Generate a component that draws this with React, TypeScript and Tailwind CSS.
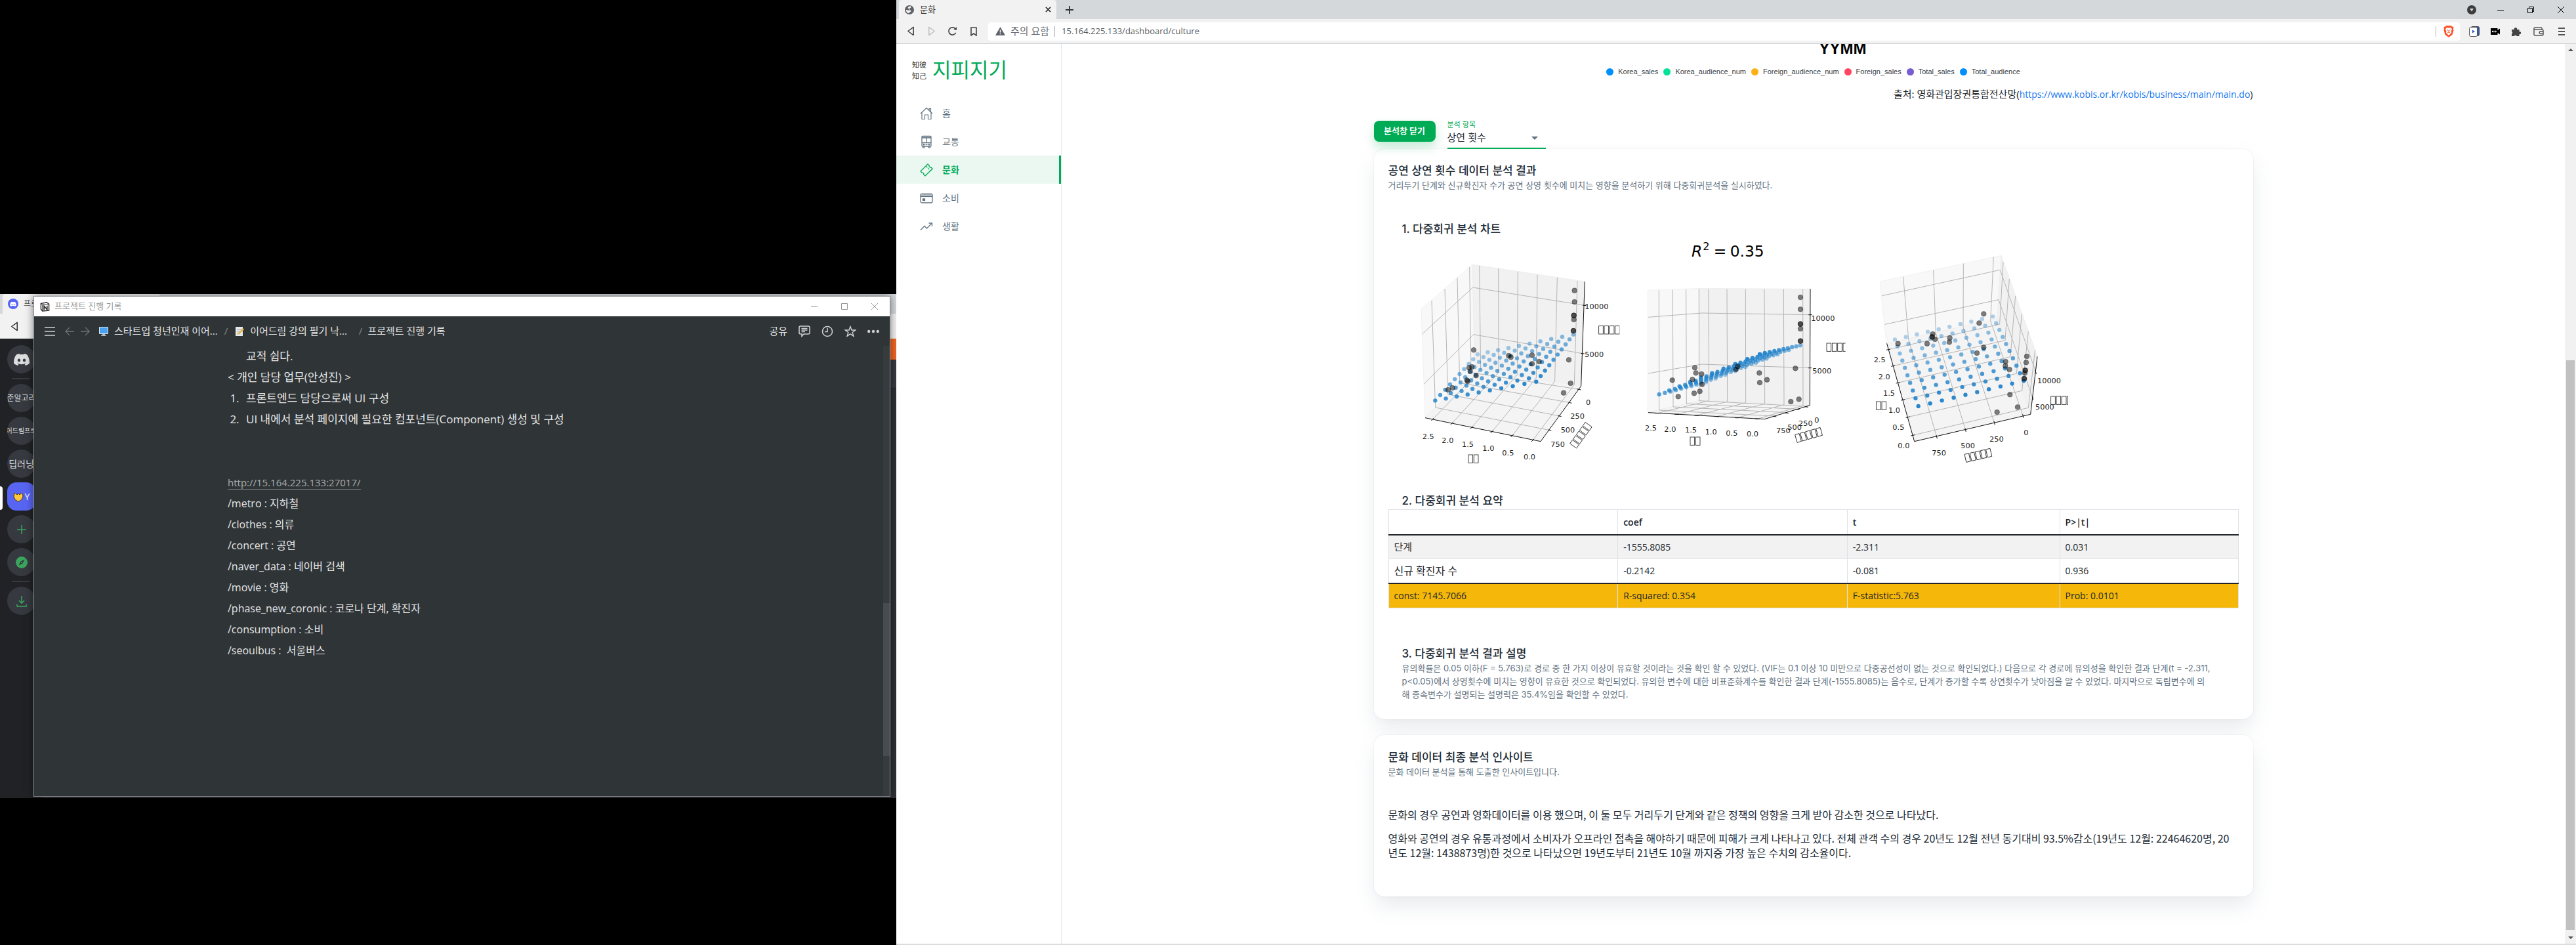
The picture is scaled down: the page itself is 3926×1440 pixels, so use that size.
import React from "react";

const SANS = "font-['Open_Sans','Noto_Sans_CJK_KR',sans-serif]";
const INTER = "font-['Inter','Noto_Sans_CJK_KR',sans-serif]";

type Pt = [number, number];

/* ---------- Scatter plots ---------- */

// Maps the unit square onto a quadrilateral with perspective.
function project(q: [Pt, Pt, Pt, Pt], u: number, v: number): Pt {
  const [[x0, y0], [x1, y1], [x2, y2], [x3, y3]] = q;
  const dx1 = x1 - x2;
  const dx2 = x3 - x2;
  const dx3 = x0 - x1 + x2 - x3;
  const dy1 = y1 - y2;
  const dy2 = y3 - y2;
  const dy3 = y0 - y1 + y2 - y3;
  const den = dx1 * dy2 - dx2 * dy1;
  const g = (dx3 * dy2 - dx2 * dy3) / den;
  const h = (dx1 * dy3 - dx3 * dy1) / den;
  const w = g * u + h * v + 1;
  return [
    ((x1 - x0 + g * x1) * u + (x3 - x0 + h * x3) * v + x0) / w,
    ((y1 - y0 + g * y1) * u + (y3 - y0 + h * y3) * v + y0) / w,
  ];
}

type Plot = {
  dx: number;
  clip: string;
  panes: [string, string][];
  grid: string;
  axes: string;
  quad: [Pt, Pt, Pt, Pt];
  alpha: [number, number, number, number];
  dots: Pt[];
  strong: Pt[];
  labels: [number, number, string][];
  boxes: [number, number, number, number][];
};

const plots: Plot[] = [
  {
    dx: 12,
    clip: "M0 0H1045V1140H0z",
    panes: [
      ["138,335 373,131 383,608 156,832", "#f8f8f8"],
      ["373,131 886,209 869,687 383,608", "#f1f1f1"],
      ["383,608 869,687 684,940 156,832", "#f4f4f4"],
    ],
    grid:
      "M190 839L410 612L404 137M278 858L492 625L491 150M368 877L577 635L580 163M461 896L664 650L669 178M554 914L749 665L760 191M648 935L838 680L852 206" +
      "M860 702L366 625L359 143M820 763L314 672L303 192M773 824L260 725L246 243M727 889L203 785L186 297" +
      "M143 449L374 236L884 318M151 677L377 451L876 538",
    axes:
      "M156 832L684 940L869 687L886 209M196 833L184 845M284 852L272 864M374 871L362 883M467 890L455 902M560 908L548 920M654 929L642 941M850 700L868 704M811 761L826 765M764 822L779 826M718 887L733 891M876 317L892 319M868 537L884 539",
    quad: [[202, 753], [664, 667], [834, 451], [396, 542]],
    alpha: [0.8, 0.95, 0.55, 0.35],
    dots: [[839, 250], [839, 302], [836, 383], [813, 567], [821, 674], [789, 718], [378, 522], [538, 548], [548, 555], [645, 546], [645, 585], [677, 575], [357, 603], [370, 599], [362, 619], [389, 639], [347, 660], [351, 665], [261, 704], [281, 695]],
    strong: [[836, 364], [834, 434]],
    labels: [[143, 929, "2.5"], [232, 948, "2.0"], [324, 965, "1.5"], [418, 984, "1.0"], [508, 1005, "0.5"], [606, 1023, "0.0"], [891, 774, "0"], [820, 837, "250"], [776, 900, "500"], [730, 965, "750"], [886, 335, "10000"], [886, 554, "5000"]],
    boxes: [[377, 1019, 2, 0], [998, 430, 4, 0], [868, 911, 5, -54]],
  },
  {
    dx: 1032,
    clip: "M130 0H1058V1140H130z",
    panes: [
      ["154,249 402,240 402,750 154,808", "#f8f8f8"],
      ["388,240 898,243 895,775 388,752", "#f1f1f1"],
      ["154,808 402,750 895,775 688,838", "#f4f4f4"],
    ],
    grid:
      "M197 811L434 754L432 243M288 816L518 758L516 243M378 821L602 763L601 243M470 826L689 768L687 243M563 832L777 772L775 243M655 837L864 776L863 243" +
      "M735 824L206 797L205 249M790 808L270 782L268 247M840 792L331 768L329 245M880 780L389 754L388 243" +
      "M156 372L401 353L898 361M156 629L401 587L895 604",
    axes:
      "M156 808L688 838L895 775L897 243M186 811H206M277 816H297M367 821H387M460 826H480M553 832H573M645 837H665M727 825L742 827M782 809L798 811M832 793L848 795M872 781L888 783M889 361H905M887 604H903",
    quad: [[206, 725], [666, 541], [851, 501], [420, 670]],
    alpha: [0.75, 0.95, 0.6, 0.35],
    dots: [[852, 281], [852, 336], [852, 425], [829, 606], [845, 747], [808, 758], [664, 627], [699, 658], [666, 671], [565, 597], [557, 611], [369, 603], [374, 627], [400, 632], [358, 657], [402, 679], [266, 660], [293, 735], [366, 720], [392, 711]],
    strong: [[852, 403], [852, 481]],
    labels: [[141, 890, "2.5"], [229, 895, "2.0"], [324, 900, "1.5"], [416, 908, "1.0"], [511, 914, "0.5"], [606, 918, "0.0"], [741, 903, "750"], [793, 888, "500"], [843, 870, "250"], [916, 853, "0"], [901, 390, "10000"], [907, 630, "5000"]],
    boxes: [[371, 938, 2, 0], [1020, 509, 4, 0], [890, 910, 5, -16]],
  },
  {
    dx: 2112,
    clip: "M0 0H996V1140H0z",
    panes: [
      ["135,209 690,90 672,380 165,492", "#f8f8f8"],
      ["690,90 856,552 824,816 672,380", "#f1f1f1"],
      ["165,492 672,380 824,816 293,940", "#f4f4f4"],
    ],
    grid:
      "M395 919L266 472L242 187M527 888L391 446L380 157M659 856L516 418L517 127M790 824L641 388L655 97" +
      "M174 520L683 404L699 119M195 595L708 478L727 197M217 672L732 553L755 275M239 750L760 630L784 356M262 829L785 708L814 438M285 912L814 786L845 522" +
      "M145 274L685 156L848 622M158 405L678 292L834 742",
    axes:
      "M167 492L293 940L824 816L855 552M165 522L183 518M187 597L205 593M209 674L227 670M231 752L249 748M254 831L272 827M277 914L295 910M393 911L397 927M525 880L529 896M657 848L661 864M788 816L792 832M846 614L850 632M832 734L836 750",
    quad: [[311, 779], [793, 663], [652, 369], [204, 474]],
    alpha: [0.95, 0.9, 0.35, 0.35],
    dots: [[218, 493], [351, 493], [377, 449], [387, 473], [455, 467], [453, 486], [610, 357], [589, 399], [610, 510], [579, 536], [710, 575], [709, 595], [728, 611], [730, 726], [765, 783], [671, 806], [807, 551], [804, 579], [798, 627]],
    strong: [[374, 462], [800, 615], [795, 653]],
    labels: [[107, 579, "2.5"], [128, 655, "2.0"], [150, 732, "1.5"], [174, 810, "1.0"], [193, 888, "0.5"], [217, 970, "0.0"], [373, 1003, "750"], [505, 972, "500"], [636, 940, "250"], [793, 911, "0"], [855, 673, "10000"], [846, 793, "5000"]],
    boxes: [[142, 776, 2, 0], [965, 752, 4, 0], [585, 1003, 5, -13]],
  },
];

const STEPS = [0, 1, 2, 3, 4, 5, 6, 7, 8, 9];

function PlotView({ plot, id }: { plot: Plot; id: string }) {
  const [a, b, c, d] = plot.alpha;
  return (
    <g transform={`translate(${plot.dx} 0)`}>
      <clipPath id={id}>
        <path d={plot.clip} />
      </clipPath>
      <g clipPath={`url(#${id})`}>
        {plot.panes.map(([pts, fill]) => (
          <polygon key={pts} points={pts} fill={fill} stroke="#ebebeb" strokeWidth="2" />
        ))}
        <path d={plot.grid} fill="none" stroke="#b4b4b4" strokeWidth="3" />
        <path d={plot.axes} fill="none" stroke="#111" strokeWidth="3" />
        {STEPS.map((j) =>
          STEPS.map((i) => {
            const u = i / 9;
            const v = 1 - j / 9;
            const [x, y] = project(plot.quad, u, v);
            const o = (1 - u) * (1 - v) * a + u * (1 - v) * b + u * v * c + (1 - u) * v * d;
            return <circle key={`${i}-${j}`} cx={x} cy={y} r="9.5" fill="#1c7fc9" fillOpacity={o} />;
          })
        )}
        {plot.dots.map(([x, y]) => (
          <circle key={`${x}-${y}`} cx={x} cy={y} r="11.5" fill="#000" fillOpacity=".5" stroke="#000" strokeOpacity=".3" strokeWidth="3" />
        ))}
        {plot.strong.map(([x, y]) => (
          <circle key={`${x}-${y}`} cx={x} cy={y} r="11.5" fill="#111" fillOpacity=".75" stroke="#000" strokeOpacity=".6" strokeWidth="3" />
        ))}
        {plot.boxes.map(([x, y, n, r]) => (
          <g key={`${x}-${y}`} transform={`translate(${x} ${y}) rotate(${r})`} fill="none" stroke="#222" strokeWidth="2.5">
            {STEPS.slice(0, n).map((k) => (
              <rect key={k} x={k * 25 - n * 12.5 + 2} y="-18" width="20" height="37" />
            ))}
          </g>
        ))}
        {plot.labels.map(([x, y, t]) => (
          <text key={`${x}-${y}`} x={x} y={y} fontSize="34" fill="#222">
            {t}
          </text>
        ))}
      </g>
    </g>
  );
}

function Charts() {
  return (
    <svg viewBox="0 20 3120 1104" className="mt-[5px] block h-[368px] w-[1040px] font-['DejaVu_Sans',sans-serif]" role="img" aria-label="다중회귀 분석 차트">
      {plots.map((p, i) => (
        <PlotView key={p.dx} plot={p} id={`plot-${i}`} />
      ))}
      <g fontSize="70" fill="#000">
        <text x="1386" y="94" fontStyle="italic">R</text>
        <text x="1438" y="64" fontSize="48">2</text>
        <text x="1487" y="94">=</text>
        <text x="1562" y="94">0.35</text>
      </g>
    </svg>
  );
}

/* ---------- Icons ---------- */

const HomeIcon = () => (
  <svg viewBox="0 0 20 20" className="size-5" fill="none" stroke="currentColor" strokeWidth="1.2">
    <path d="M1 10L10 1.5L19 10M3 8.500V18.500H7.500V12H12.500V18.500H17V8.500M14 5V2.500H16.500V7.500" />
  </svg>
);
const BusIcon = () => (
  <svg viewBox="0 0 20 20" className="size-5" fill="none" stroke="currentColor" strokeWidth="1.3">
    <rect x="3" y="1.500" width="14" height="15.500" rx="1" />
    <path d="M3 4H17M3 11.500H17M10 4V11.500M4.500 17V19.200H6.500V17M13.500 17V19.200H15.500V17M8.500 14.300H11.500" />
    <path d="M3 1.800H17V4H3z" fill="currentColor" fillOpacity=".4" stroke="none" />
    <circle cx="6" cy="14.300" r=".8" fill="currentColor" />
    <circle cx="14" cy="14.300" r=".8" fill="currentColor" />
  </svg>
);
const TicketIcon = () => (
  <svg viewBox="0 0 20 20" className="size-5" fill="none" stroke="currentColor" strokeWidth="1.3" strokeLinejoin="round">
    <path d="M12 1L14.300 3.300A2 2 0 0 0 17 6L19.200 8.200L8 19L5.700 16.700A2 2 0 0 0 3.200 14.200L1 12z" />
    <path d="M9.500 4.500L15.800 10.800" strokeDasharray="2.500 1.500" />
  </svg>
);
const CardIcon = () => (
  <svg viewBox="0 0 20 20" className="size-5" fill="none" stroke="currentColor" strokeWidth="1.3">
    <rect x="1" y="3.500" width="18" height="13.500" rx="2" />
    <path d="M1 7H19" strokeWidth="2.200" />
    <path d="M3 4.500H17" strokeOpacity=".4" />
    <rect x="4.500" y="11" width="3" height="2.500" fill="currentColor" />
  </svg>
);
const TrendIcon = () => (
  <svg viewBox="0 0 20 20" className="size-5" fill="none" stroke="currentColor" strokeWidth="1.3">
    <path d="M1 15.500L7 9.500L10.500 13L18.500 5M13.500 5H18.500V10" />
  </svg>
);

const DISCORD =
  "M20.300 4.400A19.800 19.800 0 0 0 15.400 2.900l-.6 1.300a18.300 18.300 0 0 0-5.500 0L8.600 2.900A19.700 19.700 0 0 0 3.700 4.400C.5 9-.3 13.600.1 18.100a19.900 19.900 0 0 0 6 3l1.300-2-2-.9.500-.4a14.200 14.200 0 0 0 12.200 0l.5.4-2 .9 1.300 2a19.800 19.800 0 0 0 6-3c.5-5.200-.8-9.700-3.600-13.700zM8 15.300c-1.200 0-2.200-1.100-2.200-2.400S6.800 10.500 8 10.500s2.200 1.100 2.200 2.400S9.200 15.300 8 15.300zm8 0c-1.200 0-2.200-1.100-2.200-2.400s1-2.400 2.200-2.400 2.200 1.100 2.200 2.400-1 2.400-2.200 2.400z";

const Triangle = ({ flip, className }: { flip?: boolean; className: string }) => (
  <svg viewBox="0 0 12 16" className={className} fill="none" stroke="currentColor" strokeWidth="1.6" strokeLinejoin="round">
    <path d={flip ? "M1.500 1.500V14.500L10.500 8z" : "M10.500 1.500V14.500L1.500 8z"} />
  </svg>
);

/* ---------- Left monitor ---------- */

function Server({ children, active, label }: { children: React.ReactNode; active?: boolean; label: string }) {
  return (
    <button
      aria-label={label}
      className={`flex size-[43px] shrink-0 items-center justify-center overflow-hidden whitespace-nowrap text-[#dcddde] ${
        active ? "rounded-[14px] bg-[#5865f2]" : "rounded-full bg-[#36393f]"
      }`}
    >
      {children}
    </button>
  );
}

const notes = [
  "/metro : 지하철",
  "/clothes : 의류",
  "/concert : 공연",
  "/naver_data : 네이버 검색",
  "/movie : 영화",
  "/phase_new_coronic : 코로나 단계, 확진자",
  "/consumption : 소비",
  "/seoulbus :  서울버스",
];

function NotionWindow() {
  return (
    <div className="absolute top-[3px] right-[9px] bottom-[2px] left-[51px] flex flex-col border border-[#8a8f93] bg-[#2f3437] shadow-[0_0_12px_rgba(0,0,0,.5)]">
      <header className="flex h-[30px] shrink-0 items-center bg-white pr-[17px] pl-[9px] text-[#999]">
        <svg viewBox="0 0 16 16" className="size-[15px]" fill="none" stroke="#222">
          <path d="M1.500 2.500L11 1L14.500 3.500V14L4 15L1.500 12z" fill="#fff" strokeWidth="1.500" />
          <path d="M1.500 2.500L4 4.500L14.500 3.500M4 4.500V15" />
          <path d="M6.500 13V6.500L11.500 12.500V6" strokeWidth="1.700" />
        </svg>
        <span className="ml-[7px] text-[13px]">프로젝트 진행 기록</span>
        <div className="ml-auto flex gap-[34px]">
          <button aria-label="최소화"><svg className="size-3" viewBox="0 0 12 12" stroke="currentColor"><path d="M1 6.500H11" /></svg></button>
          <button aria-label="최대화"><svg className="size-3" viewBox="0 0 12 12" stroke="currentColor" fill="none"><path d="M1.500 1.500H10.500V10.500H1.500z" /></svg></button>
          <button aria-label="닫기"><svg className="size-3" viewBox="0 0 12 12" stroke="currentColor"><path d="M1 1L11 11M11 1L1 11" /></svg></button>
        </div>
      </header>
      <nav className="flex h-[45px] shrink-0 items-center pr-4 pl-4 text-[15px] whitespace-pre text-[#e6e6e6]">
        <svg viewBox="0 0 16 14" className="h-[14px] w-4" stroke="#cfd1d2" strokeWidth="1.500"><path d="M0 1H16M0 7H16M0 13H16" /></svg>
        <svg viewBox="0 0 38 14" className="ml-[15px] h-[14px] w-[38px]" stroke="#6f7376" strokeWidth="1.300" fill="none">
          <path d="M14 7H1M7 1L1 7L7 13M24 7H37M31 1L37 7L31 13" />
        </svg>
        <svg viewBox="0 0 16 16" className="ml-[13px] size-4">
          <rect x="1" y="1" width="14" height="11" rx="1" fill="#dfe5ea" />
          <rect x="2" y="2" width="12" height="9" fill="#4aa3f0" />
          <path d="M6 12H10V14H12V15H4V14H6z" fill="#b4bcc2" />
        </svg>
        <a href="#a" className="ml-2">스타트업 청년인재 이어...</a>
        <span className="ml-[10px] text-[#85898c]">/</span>
        <svg viewBox="0 0 16 16" className="ml-[10px] size-4">
          <path d="M2 1H13V15H2z" fill="#e6e9eb" />
          <path d="M4 5H11M4 8H10M4 11H9" stroke="#9aa4ab" />
          <path d="M6 11L13 3L15 5L8 12L5 13z" fill="#e9b343" />
        </svg>
        <a href="#b" className="ml-2">이어드림 강의 필기 낙...</a>
        <span className="ml-[18px] text-[#85898c]">/</span>
        <a href="#c" className="ml-2">프로젝트 진행 기록</a>
        <div className="ml-auto flex items-center gap-[17px]">
          <button>공유</button>
          <button aria-label="댓글">
            <svg viewBox="0 0 18 18" className="size-[18px]" fill="none" stroke="#cfd1d2" strokeWidth="1.500"><path d="M3 1H15A2 2 0 0 1 17 3V11A2 2 0 0 1 15 13H8L5 16.500V13H3A2 2 0 0 1 1 11V3A2 2 0 0 1 3 1zM4.500 4.500H13.500M4.500 7H13.500M4.500 9.500H10" /></svg>
          </button>
          <button aria-label="업데이트">
            <svg viewBox="0 0 18 18" className="size-[18px]" fill="none" stroke="#cfd1d2" strokeWidth="1.500"><circle cx="9" cy="9" r="7.500" /><path d="M9 4V9.500H5" /></svg>
          </button>
          <button aria-label="즐겨찾기">
            <svg viewBox="0 0 18 18" className="size-[18px]" fill="none" stroke="#cfd1d2" strokeWidth="1.400"><path d="M9 1.500L11 7H16.800L12.200 10.500L13.900 16.200L9 12.800L4.100 16.200L5.800 10.500L1.200 7H7z" /></svg>
          </button>
          <button aria-label="더 보기">
            <svg viewBox="0 0 18 18" className="size-[18px]" fill="#cfd1d2"><circle cx="2.200" cy="9" r="2.200" /><circle cx="9" cy="9" r="2.200" /><circle cx="15.800" cy="9" r="2.200" /></svg>
          </button>
        </div>
      </nav>
      <div className="flex min-h-0 flex-1">
        <article className="min-w-0 flex-1 pl-[295px] text-[#e6e6e6]">
          <div className="text-[17px] leading-8">
            <p className="pl-7">교적 쉽다.</p>
            <p>{"< 개인 담당 업무(안성진) >"}</p>
            <ol className="list-decimal pl-[22px]">
              <li className="pl-[6px]">프론트엔드 담당으로써 UI 구성</li>
              <li className="pl-[6px]">UI 내에서 분석 페이지에 필요한 컴포넌트(Component) 생성 및 구성</li>
            </ol>
          </div>
          <p className="pt-16 text-[15px] leading-8">
            <a href="http://15.164.225.133:27017/" className="border-b border-[#7d8183] text-[#a9acad]">http://15.164.225.133:27017/</a>
          </p>
          <div className="text-[16px] leading-8 whitespace-pre">
            {notes.map((n) => (
              <p key={n}>{n}</p>
            ))}
          </div>
        </article>
        <div className="w-[10px] bg-[#363b3e] pt-[392px]">
          <div className="h-[233px] bg-[#474c50]" />
        </div>
      </div>
    </div>
  );
}

function LeftMonitor() {
  return (
    <section className={`min-w-0 bg-black pt-[448px] ${SANS}`}>
      <div className="relative flex h-[768px] flex-col overflow-hidden bg-[#2f3136]">
        <div className="flex h-[30px] shrink-0 bg-[#d5d8db]">
          <div className="ml-1 flex w-[240px] items-center gap-2 rounded-t bg-[#f2f2f2] pl-2 text-[12px] text-[#555]">
            <svg viewBox="0 0 24 24" className="size-4"><circle cx="12" cy="12" r="12" fill="#5865f2" /><path d={DISCORD} fill="#fff" transform="translate(5 5.500) scale(.58)" /></svg>
            프로젝트
          </div>
        </div>
        <div className="flex h-[38px] shrink-0 items-center bg-[#f2f2f2] pl-4 text-[#333]">
          <Triangle className="h-[15px] w-3" />
        </div>
        <div className="flex min-h-0 flex-1">
          <div className="relative flex w-[65px] flex-col items-start gap-[7px] bg-[#202225] pt-[10px] pl-[11px]">
            <Server label="홈"><svg viewBox="0 0 24 24" className="size-6" fill="currentColor"><path d={DISCORD} /></svg></Server>
            <div className="ml-[7px] h-[2px] w-7 bg-[#36393f]" />
            <Server label="백준알고리즘"><span className="text-[12px]">준알고리</span></Server>
            <Server label="이어드림프로젝트"><span className="text-[10px]">어드림프로</span></Server>
            <Server label="딥러닝"><span className="text-[14px]">딥러닝</span></Server>
            <Server label="Y" active>
              <svg viewBox="0 0 16 16" className="size-4"><path d="M8 15C4 14 1 10 1 6L3 2L6 5L8 3L10 5L13 2L15 6C15 10 12 14 8 15z" fill="#ffc83d" stroke="#4a3200" /></svg>
              <span className="ml-[2px] text-[14px] text-white">Y</span>
            </Server>
            <Server label="서버 추가"><svg viewBox="0 0 16 16" className="size-4" stroke="#3ba55d" strokeWidth="1.500"><path d="M8 1V15M1 8H15" /></svg></Server>
            <Server label="탐색"><svg viewBox="0 0 18 18" className="size-[18px]"><circle cx="9" cy="9" r="9" fill="#3ba55d" /><path d="M13.500 4.500L10.500 10.500L4.500 13.500L7.500 7.500z" fill="#36393f" /><circle cx="9" cy="9" r="1" fill="#3ba55d" /></svg></Server>
            <div className="ml-[7px] h-[2px] w-7 bg-[#36393f]" />
            <Server label="다운로드"><svg viewBox="0 0 18 18" className="size-[18px]" fill="none" stroke="#3ba55d" strokeWidth="1.600"><path d="M9 1V12M5 8L9 12L13 8M2 14V17H16V14" /></svg></Server>
            <div className="absolute top-[225px] left-0 h-9 w-1 rounded-r bg-white" />
          </div>
          <div className="flex-1">
            <div className="h-8 bg-[#f26522]" />
            <div className="h-11 border-b border-[#202225] bg-[#36393f]" />
          </div>
        </div>
        <NotionWindow />
      </div>
    </section>
  );
}

/* ---------- Right monitor ---------- */

function BrowserBar() {
  return (
    <header className={SANS}>
      <div className="flex h-[29px] items-center bg-[#d5d8db] pl-1 text-[#333]">
        <div className="flex h-full w-[240px] items-center rounded-t bg-[#f2f2f2] pr-2 pl-[9px]">
          <svg viewBox="0 0 16 16" className="size-[14px]"><circle cx="8" cy="8" r="8" fill="#5f6368" /><path d="M9 1.500C7 3 5 3 5.500 5.500C7 6 9 6.500 8.500 9C6.500 9 5 8 2 8C2 11 4 13.500 6.500 14C8 12 10 12 11 10C10 8 8 8 8.500 5C10 5 11 4 11 2.500z" fill="#f2f2f2" /></svg>
          <span className="ml-[9px] text-[13px]">문화</span>
          <button aria-label="탭 닫기" className="ml-auto"><svg viewBox="0 0 10 10" className="size-[9px]" stroke="currentColor" strokeWidth="1.800"><path d="M1 1L9 9M9 1L1 9" /></svg></button>
        </div>
        <button aria-label="새 탭" className="ml-[14px]"><svg viewBox="0 0 12 12" className="size-3" stroke="currentColor" strokeWidth="1.800"><path d="M6 0V12M0 6H12" /></svg></button>
        <div className="ml-auto flex items-center pr-[18px] text-black">
          <svg viewBox="0 0 14 14" className="size-[14px]"><circle cx="7" cy="7" r="7" fill="#3c3c3c" /><path d="M4 5H10L7 9.500z" fill="#d5d8db" /></svg>
          <button aria-label="최소화" className="ml-8"><svg viewBox="0 0 10 10" className="size-[10px]" stroke="currentColor"><path d="M0 5.500H10" /></svg></button>
          <button aria-label="복원" className="ml-9"><svg viewBox="0 0 10 10" className="size-[10px]" fill="none" stroke="currentColor"><path d="M.5 2.500H7.500V9.500H.5zM2.500 2.500V.5H9.500V7.500H7.500" /></svg></button>
          <button aria-label="닫기" className="ml-9"><svg viewBox="0 0 10 10" className="size-[10px]" stroke="currentColor"><path d="M0 0L10 10M10 0L0 10" /></svg></button>
        </div>
      </div>
      <div className="flex h-[38px] items-center border-b border-[#d0d3d6] bg-[#f2f2f2] pr-[17px] pl-4 text-[#444]">
        <button aria-label="뒤로"><Triangle className="h-[15px] w-3" /></button>
        <button aria-label="앞으로" className="ml-5 text-[#c0c0c0]"><Triangle flip className="h-[15px] w-3" /></button>
        <button aria-label="새로고침" className="ml-[18px]"><svg viewBox="0 0 16 16" className="size-[15px]" fill="none" stroke="currentColor" strokeWidth="1.800"><path d="M13.500 10.500A6 6 0 1 1 13 4.500" /><path d="M10 5.500L15 6V1z" fill="currentColor" stroke="none" /></svg></button>
        <button aria-label="북마크" className="ml-5"><svg viewBox="0 0 10 14" className="h-[14px] w-[10px]" fill="none" stroke="currentColor" strokeWidth="1.600"><path d="M1 1H9V13L5 10L1 13z" /></svg></button>
        <div className="ml-[17px] flex h-7 flex-1 items-center rounded bg-white pr-[9px] pl-[11px]">
          <svg viewBox="0 0 15 13" className="h-[13px] w-[15px]"><path d="M7.500 0L15 13H0z" fill="#5f6368" /><path d="M7.500 4.500V8.500M7.500 9.800V11.200" stroke="#fff" strokeWidth="1.500" /></svg>
          <span className="ml-2 text-[15px] text-[#6b6f73]">주의 요함</span>
          <span className="mr-[10px] ml-2 h-4 w-px bg-[#b0b0b0]" />
          <input aria-label="주소" defaultValue="15.164.225.133/dashboard/culture" className="min-w-0 flex-1 bg-transparent text-[13px] text-[#5a5e62] outline-none" />
          <span className="mr-[11px] h-4 w-px bg-[#b0b0b0]" />
          <svg viewBox="0 0 16 18" className="h-[18px] w-4"><path d="M4 0H12L13 1.500L15.500 2L15 5L15.500 7L13.500 14L8 18L2.500 14L.5 7L1 5L.5 2L3 1.500z" fill="#fb542b" /><path d="M8 3.500L11 3L13 5.500L11.500 9L12 11L8 15L4 11L4.500 9L3 5.500L5 3z" fill="#fff" /><path d="M5 6.500L7 7.200M11 6.500L9 7.200M8 7V10M6 11L8 10L10 11" stroke="#fb542b" fill="none" /></svg>
        </div>
        <div className="flex items-center">
          <svg viewBox="0 0 16 16" className="ml-[14px] size-4"><rect x="3" y=".5" width="12.500" height="14" rx="2" fill="#3057b0" stroke="#444" /><rect x=".5" y="1.500" width="12" height="14" rx="2" fill="#fff" stroke="#555" /><path d="M5 5.500V10.500L9 8z" fill="#2a5bd0" /></svg>
          <svg viewBox="0 0 14 10" className="ml-[17px] h-[10px] w-[14px]"><path d="M0 0H10.500V3L14 .5V9.500L10.500 7V10H0z" fill="#000" /><path d="M2 5H8.500M3.500 3.500L2 5L3.500 6.500M7 3.500L8.500 5L7 6.500" stroke="#fff" fill="none" /></svg>
          <svg viewBox="0 0 14 14" className="ml-[18px] size-[14px]" fill="#444"><path d="M0 4H4A2.200 2.200 0 1 1 8 4H11.500V7.300A2 2 0 1 1 11.500 11V14H7.500A2 2 0 0 0 3.800 14H0V10.500A1.900 1.900 0 0 0 0 7z" /></svg>
          <svg viewBox="0 0 16 14" className="ml-[19px] h-[14px] w-4" fill="none" stroke="#555" strokeWidth="1.500"><path d="M13 4V2.500A1.500 1.500 0 0 0 11.500 1H2.500A1.500 1.500 0 0 0 1 2.500V11.500A1.500 1.500 0 0 0 2.500 13H13.500A1.500 1.500 0 0 0 15 11.500V5.500A1.500 1.500 0 0 0 13.500 4H1.500M15 6.800H10.500A2 2 0 0 0 10.500 10.500H15" /></svg>
          <button aria-label="메뉴" className="ml-[22px]"><svg viewBox="0 0 10 12" className="h-3 w-[10px]" stroke="#555" strokeWidth="2"><path d="M0 1H10M0 6H10M0 11H10" /></svg></button>
        </div>
      </div>
    </header>
  );
}

const navItems = [
  { label: "홈", icon: <HomeIcon />, active: false },
  { label: "교통", icon: <BusIcon />, active: false },
  { label: "문화", icon: <TicketIcon />, active: true },
  { label: "소비", icon: <CardIcon />, active: false },
  { label: "생활", icon: <TrendIcon />, active: false },
];

function Sidebar() {
  return (
    <aside className={`w-[252px] shrink-0 border-r border-[#e3e6e9] pt-[22px] ${INTER}`}>
      <a href="#home" className="flex items-center pl-6">
        <span className="font-['Noto_Sans_CJK_JP',sans-serif] text-[11px] leading-[17px] text-[#333]">
          知彼
          <br />
          知己
        </span>
        <span className="ml-[9px] text-[31px] leading-9 text-[#00ab55]">지피지기</span>
      </a>
      <nav className="mt-[26px] flex flex-col">
        {navItems.map((n) => (
          <a
            key={n.label}
            href={`#${n.label}`}
            className={`flex h-[43px] items-center gap-[14px] pl-9 text-[14px] ${
              n.active ? "border-r-[3px] border-[#00ab55] bg-[#ebf8f1] font-bold text-[#00ab55]" : "text-[#637381]"
            }`}
          >
            {n.icon}
            {n.label}
          </a>
        ))}
      </nav>
    </aside>
  );
}

const legend: [string, string][] = [
  ["Korea_sales", "bg-[#008ffb]"],
  ["Korea_audience_num", "bg-[#00e396]"],
  ["Foreign_audience_num", "bg-[#feb019]"],
  ["Foreign_sales", "bg-[#ff4560]"],
  ["Total_sales", "bg-[#775dd0]"],
  ["Total_audience", "bg-[#008ffb]"],
];

const card =
  "rounded-2xl bg-white px-[22px] shadow-[0_0_2px_0_rgba(145,158,171,.24),0_16px_32px_-4px_rgba(145,158,171,.24)]";
const cell = "border border-[#dee2e6] px-2";

function CultureMain() {
  return (
    <main className="min-w-0 flex-1 overflow-hidden text-[#212b36]">
      <div className="mx-auto w-full max-w-[1340px]">
        <div className="font-['Liberation_Sans',sans-serif]">
          <p className="h-[14px] pl-[90px] text-center text-[24px] leading-[14px] font-bold text-black">YYMM</p>
          <ul className="mt-5 flex justify-center gap-2 text-[11px] leading-4 text-[#373d3f]">
            {legend.map(([t, c]) => (
              <li key={t} className="flex items-center gap-[7px]">
                <span className={`size-[11px] rounded-full ${c}`} />
                {t}
              </li>
            ))}
          </ul>
        </div>
        <p className={`mt-[14px] text-right text-[14px] leading-6 text-[#212529] ${SANS}`}>
          <span className="text-[15px]">출처: 영화관입장권통합전산망(</span>
          <a href="https://www.kobis.or.kr/kobis/business/main/main.do" className="text-[#1877f2]">
            https://www.kobis.or.kr/kobis/business/main/main.do
          </a>
          )
        </p>
        <div className={`mt-7 flex items-start gap-[18px] ${INTER}`}>
          <button className="h-8 w-[94px] rounded-lg bg-[#00ab55] text-[13px] font-bold text-white shadow-[0_8px_16px_0_rgba(0,171,85,.24)]">분석창 닫기</button>
          <div className="relative flex h-[43px] w-[150px] flex-col border-b-2 border-[#00ab55]">
            <label htmlFor="metric" className="text-[11px] leading-3 text-[#00ab55]">분석 항목</label>
            <select id="metric" className="w-full flex-1 appearance-none bg-transparent text-[15px] outline-none">
              <option>상연 횟수</option>
            </select>
            <svg viewBox="0 0 10 5" className="pointer-events-none absolute right-3 bottom-3 h-[5px] w-[10px]" fill="#637381"><path d="M0 0H10L5 5z" /></svg>
          </div>
        </div>

        <section className={`${card} pt-[21px] pb-7`}>
          <div className={INTER}>
            <h2 className="text-[17px] leading-6 font-medium">공연 상연 횟수 데이터 분석 결과</h2>
            <p className="text-[13px] leading-5 text-[#637381]">
              거리두기 단계와 신규확진자 수가 공연 상영 횟수에 미치는 영향을 분석하기 위해 다중회귀분석을 실시하였다.
            </p>
            <h3 className="mt-[45px] pl-[21px] text-[17px] leading-6 font-medium">1. 다중회귀 분석 차트</h3>
          </div>
          <Charts />
          <h3 className={`mt-[17px] pl-[21px] text-[17px] leading-6 font-medium ${INTER}`}>2. 다중회귀 분석 요약</h3>
          <table className={`mt-px w-full table-fixed border-collapse text-left text-[14px] text-[#212529] ${SANS}`}>
            <colgroup>
              <col className="w-[27%]" />
              <col className="w-[27%]" />
              <col className="w-[25%]" />
              <col className="w-[21%]" />
            </colgroup>
            <thead>
              <tr className="h-[38px] border-b-2 border-[#212529]">
                <td className={cell} />
                <th className={`${cell} font-semibold`}>coef</th>
                <th className={`${cell} font-semibold`}>t</th>
                <th className={`${cell} font-semibold`}>{"P>|t|"}</th>
              </tr>
            </thead>
            <tbody className="border-y-2 border-[#212529]">
              <tr className="h-[37px] bg-[#f2f2f2]">
                <td className={`${cell} text-[15px]`}>단계</td>
                <td className={cell}>-1555.8085</td>
                <td className={cell}>-2.311</td>
                <td className={cell}>0.031</td>
              </tr>
              <tr className="h-[37px]">
                <td className={`${cell} text-[16px] leading-5`}>신규 확진자 수</td>
                <td className={cell}>-0.2142</td>
                <td className={cell}>-0.081</td>
                <td className={cell}>0.936</td>
              </tr>
            </tbody>
            <tfoot>
              <tr className="h-[38px] bg-[#f4b70a]">
                <td className={cell}>const: 7145.7066</td>
                <td className={cell}>R-squared: 0.354</td>
                <td className={cell}>F-statistic:5.763</td>
                <td className={cell}>Prob: 0.0101</td>
              </tr>
            </tfoot>
          </table>
          <div className={`mt-[57px] px-[21px] ${INTER}`}>
            <h3 className="text-[17px] leading-6 font-medium">3. 다중회귀 분석 결과 설명</h3>
            <p className="text-[13px] leading-5 text-[#637381]">
              유의확률은 0.05 이하(F = 5.763)로 경로 중 한 가지 이상이 유효할 것이라는 것을 확인 할 수 있었다. (VIF는 0.1 이상 10 미만으로 다중공선성이 없는 것으로 확인되었다.) 다음으로 각 경로에 유의성을 확인한 결과 단계(t = -2.311,
              <br />
              p&lt;0.05)에서 상영횟수에 미치는 영향이 유효한 것으로 확인되었다. 유의한 변수에 대한 비표준화계수를 확인한 결과 단계(-1555.8085)는 음수로, 단계가 증가할 수록 상연횟수가 낮아짐을 알 수 있었다. 마지막으로 독립변수에 의
              <br />
              해 종속변수가 설명되는 설명력은 35.4%임을 확인할 수 있었다.
            </p>
          </div>
        </section>

        <section className={`${card} mt-[24px] pt-[22px] pb-14`}>
          <div className={INTER}>
            <h2 className="text-[17px] leading-6 font-medium">문화 데이터 최종 분석 인사이트</h2>
            <p className="text-[13px] leading-5 text-[#637381]">문화 데이터 분석을 통해 도출한 인사이트입니다.</p>
          </div>
          <div className="mt-[44px] font-['Noto_Sans_CJK_KR',sans-serif] text-[16px] leading-[22px]">
            <p>문화의 경우 공연과 영화데이터를 이용 했으며, 이 둘 모두 거리두기 단계와 같은 정책의 영향을 크게 받아 감소한 것으로 나타났다.</p>
            <p className="mt-[14px]">
              영화와 공연의 경우 유통과정에서 소비자가 오프라인 접촉을 해야하기 때문에 피해가 크게 나타나고 있다. 전체 관객 수의 경우 20년도 12월 전년 동기대비 93.5%감소(19년도 12월: 22464620명, 20년도 12월: 1438873명)한 것으로 나타났으면 19년도부터 21년도 10월 까지중 가장 높은 수치의 감소율이다.
            </p>
          </div>
        </section>
      </div>
    </main>
  );
}

function PageScrollbar() {
  return (
    <div className="flex w-[17px] shrink-0 flex-col items-center justify-between bg-[#f1f1f1] py-[7px]">
      <svg viewBox="0 0 8 4" className="h-1 w-2" fill="#505050"><path d="M0 4H8L4 0z" /></svg>
      <div className="mt-auto mb-[10px] h-[64%] w-[13px] bg-[#c1c1c1]" />
      <svg viewBox="0 0 8 4" className="h-1 w-2" fill="#505050"><path d="M0 0H8L4 4z" /></svg>
    </div>
  );
}

export default function App() {
  return (
    <div className="grid h-screen grid-cols-[1366fr_2560fr] overflow-hidden bg-black">
      <LeftMonitor />
      <section className="flex min-h-0 min-w-0 flex-col border-b-2 border-[#dcdcdc] bg-white">
        <BrowserBar />
        <div className="flex min-h-0 flex-1">
          <Sidebar />
          <CultureMain />
          <PageScrollbar />
        </div>
      </section>
    </div>
  );
}
